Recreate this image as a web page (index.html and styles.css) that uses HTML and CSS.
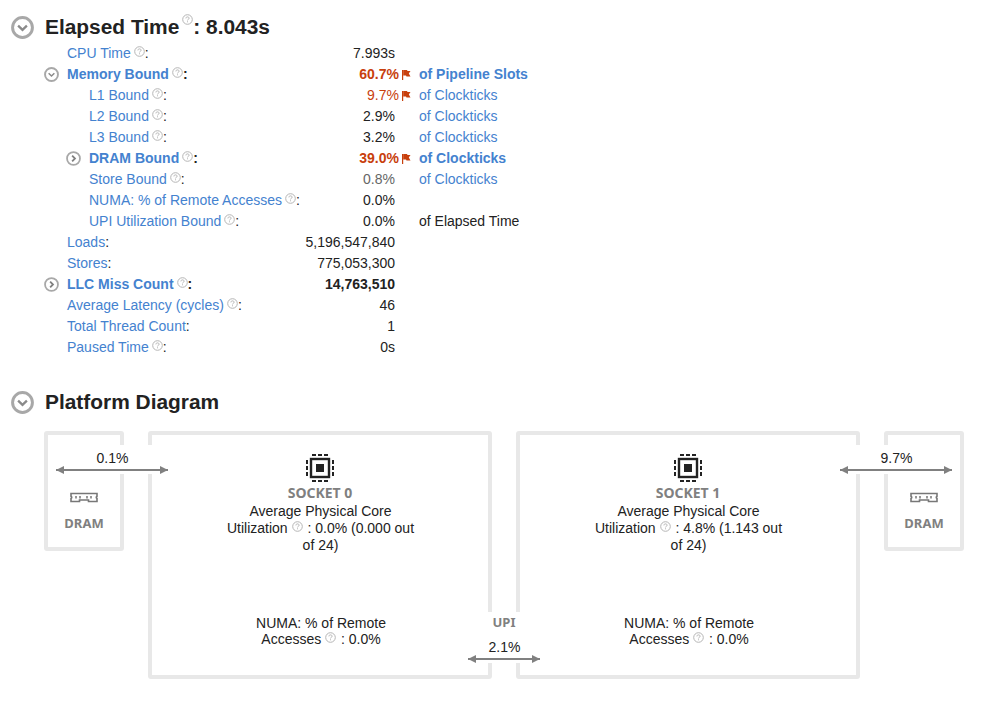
FILE: index.html
```html
<!DOCTYPE html>
<html lang="en">
<head>
<meta charset="utf-8">
<title>Summary</title>
<link rel="stylesheet" href="styles.css">
</head>
<body>
<svg class="defs" width="0" height="0" aria-hidden="true">
  <defs>
    <symbol id="help" viewBox="0 0 11 11">
      <circle cx="5.5" cy="5.5" r="4.8" fill="none" stroke="#b5b5b5" stroke-width="1"/>
      <path d="M3.9 4.4C3.9 3.4 4.6 2.9 5.5 2.9S7.1 3.4 7.1 4.3C7.1 5.3 5.5 5.3 5.5 6.4" fill="none" stroke="#b5b5b5" stroke-width="1"/>
      <rect x="5" y="7.3" width="1" height="1" fill="#b5b5b5"/>
    </symbol>
    <symbol id="down" viewBox="0 0 22 22">
      <circle cx="11" cy="11" r="9.5" fill="none" stroke="#a8a8a8" stroke-width="2.8"/>
      <path d="M6.8 9.2L11 13.2L15.2 9.2" fill="none" stroke="#8a8a8a" stroke-width="2.2"/>
    </symbol>
    <symbol id="right" viewBox="0 0 22 22">
      <circle cx="11" cy="11" r="9.5" fill="none" stroke="#a8a8a8" stroke-width="2.6"/>
      <path d="M9 6.8L13.2 11L9 15.2" fill="none" stroke="#808080" stroke-width="2.6"/>
    </symbol>
    <symbol id="flag" viewBox="0 0 9 10">
      <path d="M0 0H1.2V10H0Z" fill="#c8400d"/>
      <path d="M1.2 0H5L5.5 1H8.5L6.8 3.5L8.5 6.5H4.5L4 5.5H1.2Z" fill="#c8400d"/>
    </symbol>
    <symbol id="chip" viewBox="0 0 30 30">
      <path d="M7 2H11M13 2H17M19 2H23M7 28H11M13 28H17M19 28H23M2 7V11M2 13V17M2 19V23M28 7V11M28 13V17M28 19V23" fill="none" stroke="#222" stroke-width="2"/>
      <rect x="6" y="6" width="18" height="18" fill="none" stroke="#222" stroke-width="2.4"/>
      <rect x="11" y="11" width="8" height="8" fill="#222"/>
    </symbol>
    <symbol id="ram" viewBox="0 0 28 12">
      <path d="M1 1.5H27V4.2C26 4.6 26 6 27 6.4V9.5H18.5V8H9.5V9.5H1V6.4C2 6 2 4.6 1 4.2Z" fill="none" stroke="#777" stroke-width="1.6"/>
      <path d="M6 4V6.5M10 4V6.5M17 4V6.5M21 4V6.5" stroke="#777" stroke-width="1.5"/>
    </symbol>
  </defs>
</svg>

<h2 class="heading">
  <svg class="toggle-lg"><use href="#down"/></svg>
  <span>Elapsed Time<svg class="help help-sup"><use href="#help"/></svg>: 8.043s</span>
</h2>

<div class="metrics">
  <div class="row">
    <div class="label"><span class="slot"></span><a class="link">CPU Time</a><svg class="help"><use href="#help"/></svg>:</div>
    <div class="value">7.993s</div><div class="mark"></div><div class="unit"></div>
  </div>
  <div class="row strong">
    <div class="label"><span class="slot"><svg class="toggle"><use href="#down"/></svg></span><a class="link">Memory Bound</a><svg class="help"><use href="#help"/></svg>:</div>
    <div class="value alert">60.7%</div><div class="mark"><svg class="flag"><use href="#flag"/></svg></div><div class="unit link">of Pipeline Slots</div>
  </div>
  <div class="row sub">
    <div class="label"><span class="slot"></span><a class="link">L1 Bound</a><svg class="help"><use href="#help"/></svg>:</div>
    <div class="value alert">9.7%</div><div class="mark"><svg class="flag"><use href="#flag"/></svg></div><div class="unit link">of Clockticks</div>
  </div>
  <div class="row sub">
    <div class="label"><span class="slot"></span><a class="link">L2 Bound</a><svg class="help"><use href="#help"/></svg>:</div>
    <div class="value">2.9%</div><div class="mark"></div><div class="unit link">of Clockticks</div>
  </div>
  <div class="row sub">
    <div class="label"><span class="slot"></span><a class="link">L3 Bound</a><svg class="help"><use href="#help"/></svg>:</div>
    <div class="value">3.2%</div><div class="mark"></div><div class="unit link">of Clockticks</div>
  </div>
  <div class="row sub strong">
    <div class="label"><span class="slot"><svg class="toggle"><use href="#right"/></svg></span><a class="link">DRAM Bound</a><svg class="help"><use href="#help"/></svg>:</div>
    <div class="value alert">39.0%</div><div class="mark"><svg class="flag"><use href="#flag"/></svg></div><div class="unit link">of Clockticks</div>
  </div>
  <div class="row sub">
    <div class="label"><span class="slot"></span><a class="link">Store Bound</a><svg class="help"><use href="#help"/></svg>:</div>
    <div class="value muted">0.8%</div><div class="mark"></div><div class="unit link">of Clockticks</div>
  </div>
  <div class="row sub">
    <div class="label"><span class="slot"></span><a class="link">NUMA: % of Remote Accesses</a><svg class="help"><use href="#help"/></svg>:</div>
    <div class="value">0.0%</div><div class="mark"></div><div class="unit"></div>
  </div>
  <div class="row sub">
    <div class="label"><span class="slot"></span><a class="link">UPI Utilization Bound</a><svg class="help"><use href="#help"/></svg>:</div>
    <div class="value">0.0%</div><div class="mark"></div><div class="unit">of Elapsed Time</div>
  </div>
  <div class="row">
    <div class="label"><span class="slot"></span><a class="link">Loads</a>:</div>
    <div class="value">5,196,547,840</div><div class="mark"></div><div class="unit"></div>
  </div>
  <div class="row">
    <div class="label"><span class="slot"></span><a class="link">Stores</a>:</div>
    <div class="value">775,053,300</div><div class="mark"></div><div class="unit"></div>
  </div>
  <div class="row strong">
    <div class="label"><span class="slot"><svg class="toggle"><use href="#right"/></svg></span><a class="link">LLC Miss Count</a><svg class="help"><use href="#help"/></svg>:</div>
    <div class="value">14,763,510</div><div class="mark"></div><div class="unit"></div>
  </div>
  <div class="row">
    <div class="label"><span class="slot"></span><a class="link">Average Latency (cycles)</a><svg class="help"><use href="#help"/></svg>:</div>
    <div class="value">46</div><div class="mark"></div><div class="unit"></div>
  </div>
  <div class="row">
    <div class="label"><span class="slot"></span><a class="link">Total Thread Count</a>:</div>
    <div class="value">1</div><div class="mark"></div><div class="unit"></div>
  </div>
  <div class="row">
    <div class="label"><span class="slot"></span><a class="link">Paused Time</a><svg class="help"><use href="#help"/></svg>:</div>
    <div class="value">0s</div><div class="mark"></div><div class="unit"></div>
  </div>
</div>

<h2 class="heading heading-second">
  <svg class="toggle-lg"><use href="#down"/></svg>
  <span>Platform Diagram</span>
</h2>

<div class="diagram">
  <div class="box dram dram-left">
    <svg class="ram"><use href="#ram"/></svg>
    <div class="caption">DRAM</div>
  </div>
  <div class="box socket socket-0">
    <svg class="chip"><use href="#chip"/></svg>
    <div class="caption">SOCKET 0</div>
    <div class="stat">Average Physical Core Utilization <svg class="help help-inline"><use href="#help"/></svg> : 0.0% (0.000 out of 24)</div>
    <div class="stat stat-numa">NUMA: % of Remote Accesses <svg class="help help-inline"><use href="#help"/></svg> : 0.0%</div>
  </div>
  <div class="box socket socket-1">
    <svg class="chip"><use href="#chip"/></svg>
    <div class="caption">SOCKET 1</div>
    <div class="stat">Average Physical Core Utilization <svg class="help help-inline"><use href="#help"/></svg> : 4.8% (1.143 out of 24)</div>
    <div class="stat stat-numa">NUMA: % of Remote Accesses <svg class="help help-inline"><use href="#help"/></svg> : 0.0%</div>
  </div>
  <div class="box dram dram-right">
    <svg class="ram"><use href="#ram"/></svg>
    <div class="caption">DRAM</div>
  </div>

  <div class="link-arrow arrow-left"><span class="arrow-value">0.1%</span><i class="arrow-line"></i></div>
  <div class="link-arrow arrow-right"><span class="arrow-value">9.7%</span><i class="arrow-line"></i></div>
  <div class="link-arrow arrow-upi">
    <div class="caption">UPI</div>
    <span class="arrow-value">2.1%</span><i class="arrow-line"></i>
  </div>
</div>
</body>
</html>
```

FILE: styles.css
```css
* { box-sizing: border-box; }
html, body { margin: 0; background: #fff; }
body {
  height: 703px;
  overflow: hidden;
  padding: 14px 0 0 11px;
  font-family: "Liberation Sans", Arial, sans-serif;
  font-size: 14px;
  color: #222;
}
.defs { position: absolute; }

.heading {
  display: flex;
  align-items: center;
  gap: 11px;
  height: 26px;
  margin: 0;
  font-size: 20.9px;
  line-height: 26px;
  font-weight: 700;
  color: #222;
}
.heading-second { margin-top: 31px; }
.toggle-lg { width: 23px; height: 23px; flex: none; }
.help { width: 11px; height: 11px; margin-left: 3px; position: relative; top: -2px; }
.help-sup { margin-left: 3px; top: -9px; }
.help-inline { margin: 0 1px 0 0; top: -1px; }

.metrics { margin: 3px 0 0 33px; }
.row {
  display: grid;
  grid-template-columns: 258px 93px 24px 1fr;
  height: 21px;
  line-height: 21px;
  white-space: nowrap;
}
.label { display: flex; align-items: center; }
.slot { width: 23px; flex: none; display: flex; align-items: center; }
.sub .label { padding-left: 22px; }
.toggle { width: 15px; height: 15px; }
.strong { font-weight: 700; }
.value { text-align: right; }
.link { color: #4482cf; }
.alert { color: #c8400d; margin-right: -4px; }
.muted { color: #666; }
.mark { display: flex; align-items: center; padding-left: 7px; }
.flag { width: 9px; height: 10px; }

.diagram {
  position: relative;
  width: 964px;
  height: 260px;
  margin: 16px 0 0 -11px;
  text-align: center;
}
.box {
  position: absolute;
  top: 0;
  background: #fff;
  border: 4px solid #e8e8e8;
  border-radius: 3px;
}
.dram { width: 80px; height: 120px; padding-top: 57px; }
.dram-left { left: 44px; }
.dram-right { left: 884px; }
.socket { width: 344px; height: 248px; padding: 18px 74px 0; line-height: 17px; }
.socket-0 { left: 148px; }
.socket-1 { left: 516px; }
.ram { display: block; width: 28px; height: 12px; margin: 0 auto 11px; }
.chip { display: block; width: 30px; height: 30px; margin: 0 auto 1px; }
.caption {
  font-family: "Noto Sans", "Liberation Sans", sans-serif;
  font-size: 13px;
  font-weight: 700;
  line-height: 17px;
  color: #808080;
}
.socket .caption { font-size: 14px; line-height: 18px; margin-bottom: 1px; }
.stat { margin: 0 -4px 0 -3px; }
.stat-numa { position: absolute; left: 75px; right: 73px; top: 180px; margin: 0; line-height: 16px; }

.link-arrow {
  position: absolute;
  display: flex;
  flex-direction: column;
  justify-content: flex-end;
  background: #fff;
  text-align: center;
  line-height: 16px;
  padding-bottom: 3px;
}
.arrow-value { display: block; padding-left: 1px; }
.arrow-line {
  display: block;
  position: relative;
  height: 2px;
  margin-top: 3px;
  background: #808080;
}
.arrow-line::before, .arrow-line::after {
  content: "";
  position: absolute;
  top: -3px;
  border-top: 4px solid transparent;
  border-bottom: 4px solid transparent;
}
.arrow-line::before { left: 0; border-right: 8px solid #808080; }
.arrow-line::after { right: 0; border-left: 8px solid #808080; }
.arrow-left { left: 56px; top: 14px; width: 112px; height: 29px; }
.arrow-right { left: 840px; top: 14px; width: 112px; height: 29px; }
.arrow-upi { left: 468px; top: 181px; width: 72px; height: 51px; padding-bottom: 3px; }
.arrow-upi .caption { margin-bottom: 8px; }
```
